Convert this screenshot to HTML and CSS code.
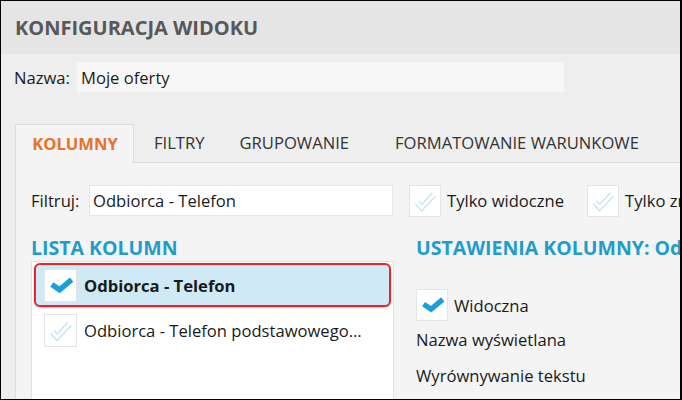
FILE: index.html
```html
<!DOCTYPE html>
<html lang="pl">
<head>
<meta charset="utf-8">
<title>Konfiguracja widoku</title>
<link rel="stylesheet" href="styles.css">
</head>
<body>
<div class="frame">
  <div class="header"><h1 class="title">KONFIGURACJA WIDOKU</h1></div>
  <div class="main">
    <div class="name-row">
      <span class="label">Nazwa:</span>
      <div class="name-input">Moje oferty</div>
    </div>
    <div class="tabs">
      <div class="tab active">KOLUMNY</div>
      <div class="tab tab-filtry">FILTRY</div>
      <div class="tab tab-grup">GRUPOWANIE</div>
      <div class="tab tab-format">FORMATOWANIE WARUNKOWE</div>
    </div>
    <div class="panel">
      <div class="filter-row">
        <span class="label">Filtruj:</span>
        <div class="filter-input">Odbiorca - Telefon</div>
        <div class="check-label first">
          <span class="cb"><svg class="ck off" viewBox="0 0 32 32"><path class="ck-out" d="M7.5 17.5 L12.5 23 L25.5 9"/><path class="ck-in" d="M7.5 17.5 L12.5 23 L25.5 9"/></svg></span>
          <span>Tylko widoczne</span>
        </div>
        <div class="check-label second">
          <span class="cb"><svg class="ck off" viewBox="0 0 32 32"><path class="ck-out" d="M7.5 17.5 L12.5 23 L25.5 9"/><path class="ck-in" d="M7.5 17.5 L12.5 23 L25.5 9"/></svg></span>
          <span>Tylko zmienione</span>
        </div>
      </div>
      <div class="columns">
        <div class="col-left">
          <h2 class="section">LISTA KOLUMN</h2>
          <div class="list">
            <div class="item selected">
              <span class="cb"><svg class="ck on" viewBox="0 0 32 32"><path d="M7 15 L15 20.5 L27.5 10"/></svg></span>
              <span class="item-text bold">Odbiorca - Telefon</span>
            </div>
            <div class="item">
              <span class="cb"><svg class="ck off" viewBox="0 0 32 32"><path class="ck-out" d="M7.5 17.5 L12.5 23 L25.5 9"/><path class="ck-in" d="M7.5 17.5 L12.5 23 L25.5 9"/></svg></span>
              <span class="item-text">Odbiorca - Telefon podstawowego...</span>
            </div>
          </div>
        </div>
        <div class="col-right">
          <h2 class="section">USTAWIENIA KOLUMNY: Odbiorca - Telefon</h2>
          <div class="check-label visible">
            <span class="cb"><svg class="ck on" viewBox="0 0 32 32"><path d="M7 15 L15 20.5 L27.5 10"/></svg></span>
            <span>Widoczna</span>
          </div>
          <div class="field">Nazwa wyświetlana</div>
          <div class="field field-align">Wyrównywanie tekstu</div>
        </div>
      </div>
    </div>
  </div>
</div>
</body>
</html>
```

FILE: styles.css
```css
* { box-sizing: border-box; }
html, body { margin: 0; padding: 0; background: #fff; }
body {
  font-family: "Open Sans", "Noto Sans", sans-serif;
  font-size: 16.6px;
  color: #1a1a1a;
}
.frame {
  width: 682px;
  height: 400px;
  border: 1px solid #000;
  border-right-width: 2px;
  overflow: hidden;
  background: #eeeeee;
  white-space: nowrap;
  display: flex;
  flex-direction: column;
}
.header {
  height: 53px;
  background: #e5e5e5;
  padding-left: 14px;
  display: flex;
  align-items: center;
  flex: none;
}
.title {
  margin: 0;
  font-size: 20px;
  font-weight: 700;
  color: #585858;
}
.main {
  flex: 1;
  display: flex;
  flex-direction: column;
  min-height: 0;
}
.name-row {
  display: flex;
  align-items: center;
  margin-top: 8px;
  padding-left: 13px;
  height: 30px;
  flex: none;
}
.name-row > * { flex: none; }
.name-row .label { width: 63px; }
.name-input {
  width: 487px;
  height: 30px;
  background: #f7f7f7;
  padding-left: 4px;
  display: flex;
  align-items: center;
}
.tabs {
  display: flex;
  margin-top: 32px;
  padding-left: 14px;
  height: 38px;
  position: relative;
  z-index: 1;
  flex: none;
}
.tab {
  display: flex;
  align-items: center;
  color: #333;
  padding-bottom: 2px;
  flex: none;
}
.tab.active {
  width: 119px;
  justify-content: center;
  border: 1px solid #dcdcdc;
  border-bottom: none;
  background: #f4f4f4;
  color: #e8722c;
  font-weight: 700;
  height: 39px;
  padding-left: 1px;
}
.tab-filtry { margin-left: 20px; }
.tab-grup { margin-left: 35px; }
.tab-format { margin-left: 46px; }
.panel {
  flex: 1;
  margin-left: 14px;
  border-left: 1px solid #dcdcdc;
  border-top: 1px solid #dcdcdc;
  background: #f4f4f4;
  padding: 22px 0 0 15px;
  min-height: 0;
}
.filter-row {
  display: flex;
  align-items: center;
  height: 31px;
}
.filter-row > * { flex: none; }
.filter-row .label { width: 58px; }
.filter-input {
  width: 304px;
  height: 31px;
  background: #fff;
  border: 1px solid #e6e6e6;
  padding-left: 3px;
  display: flex;
  align-items: center;
}
.check-label {
  display: flex;
  align-items: center;
  gap: 6px;
}
.check-label.first { margin-left: 16px; }
.check-label.second { margin-left: 23px; }
.cb {
  width: 32px;
  height: 32px;
  background: #fff;
  border: 1px solid #e4e4e4;
  display: flex;
  flex: none;
}
.ck { width: 100%; height: 100%; }
.ck path { fill: none; stroke-linecap: butt; stroke-linejoin: miter; }
.ck.on path { stroke: #1b9fdc; stroke-width: 5.6; }
.ck.off .ck-out { stroke: #bde2f4; stroke-width: 6; }
.ck.off .ck-in { stroke: #fff; stroke-width: 3.4; }
.columns {
  display: flex;
  margin-top: 19px;
}
.section {
  margin: 0;
  font-size: 19.5px;
  font-weight: 700;
  color: #1e9dcb;
  line-height: 26px;
  height: 26px;
}
.col-left {
  width: 363px;
  flex: none;
}
.list {
  height: 200px;
  background: #fff;
  border: 1px solid #e2e2e2;
  padding: 1px 2px;
}
.item {
  display: flex;
  align-items: center;
  height: 46px;
  padding-left: 10px;
  gap: 7px;
}
.item.selected {
  height: 44px;
  background: #cfe9f5;
  border: 2px solid #e8232b;
  border-radius: 6px;
  padding-left: 8px;
  box-shadow: 0 1px 2px rgba(0,0,0,0.2);
}
.item .cb { width: 33px; height: 33px; }
.item-text.bold { font-weight: 700; }
.col-right {
  margin-left: 22px;
}
.check-label.visible { margin-top: 28px; }
.field { margin-top: 6px; height: 26px; line-height: 26px; }
.field-align { margin-top: 10px; }
```
